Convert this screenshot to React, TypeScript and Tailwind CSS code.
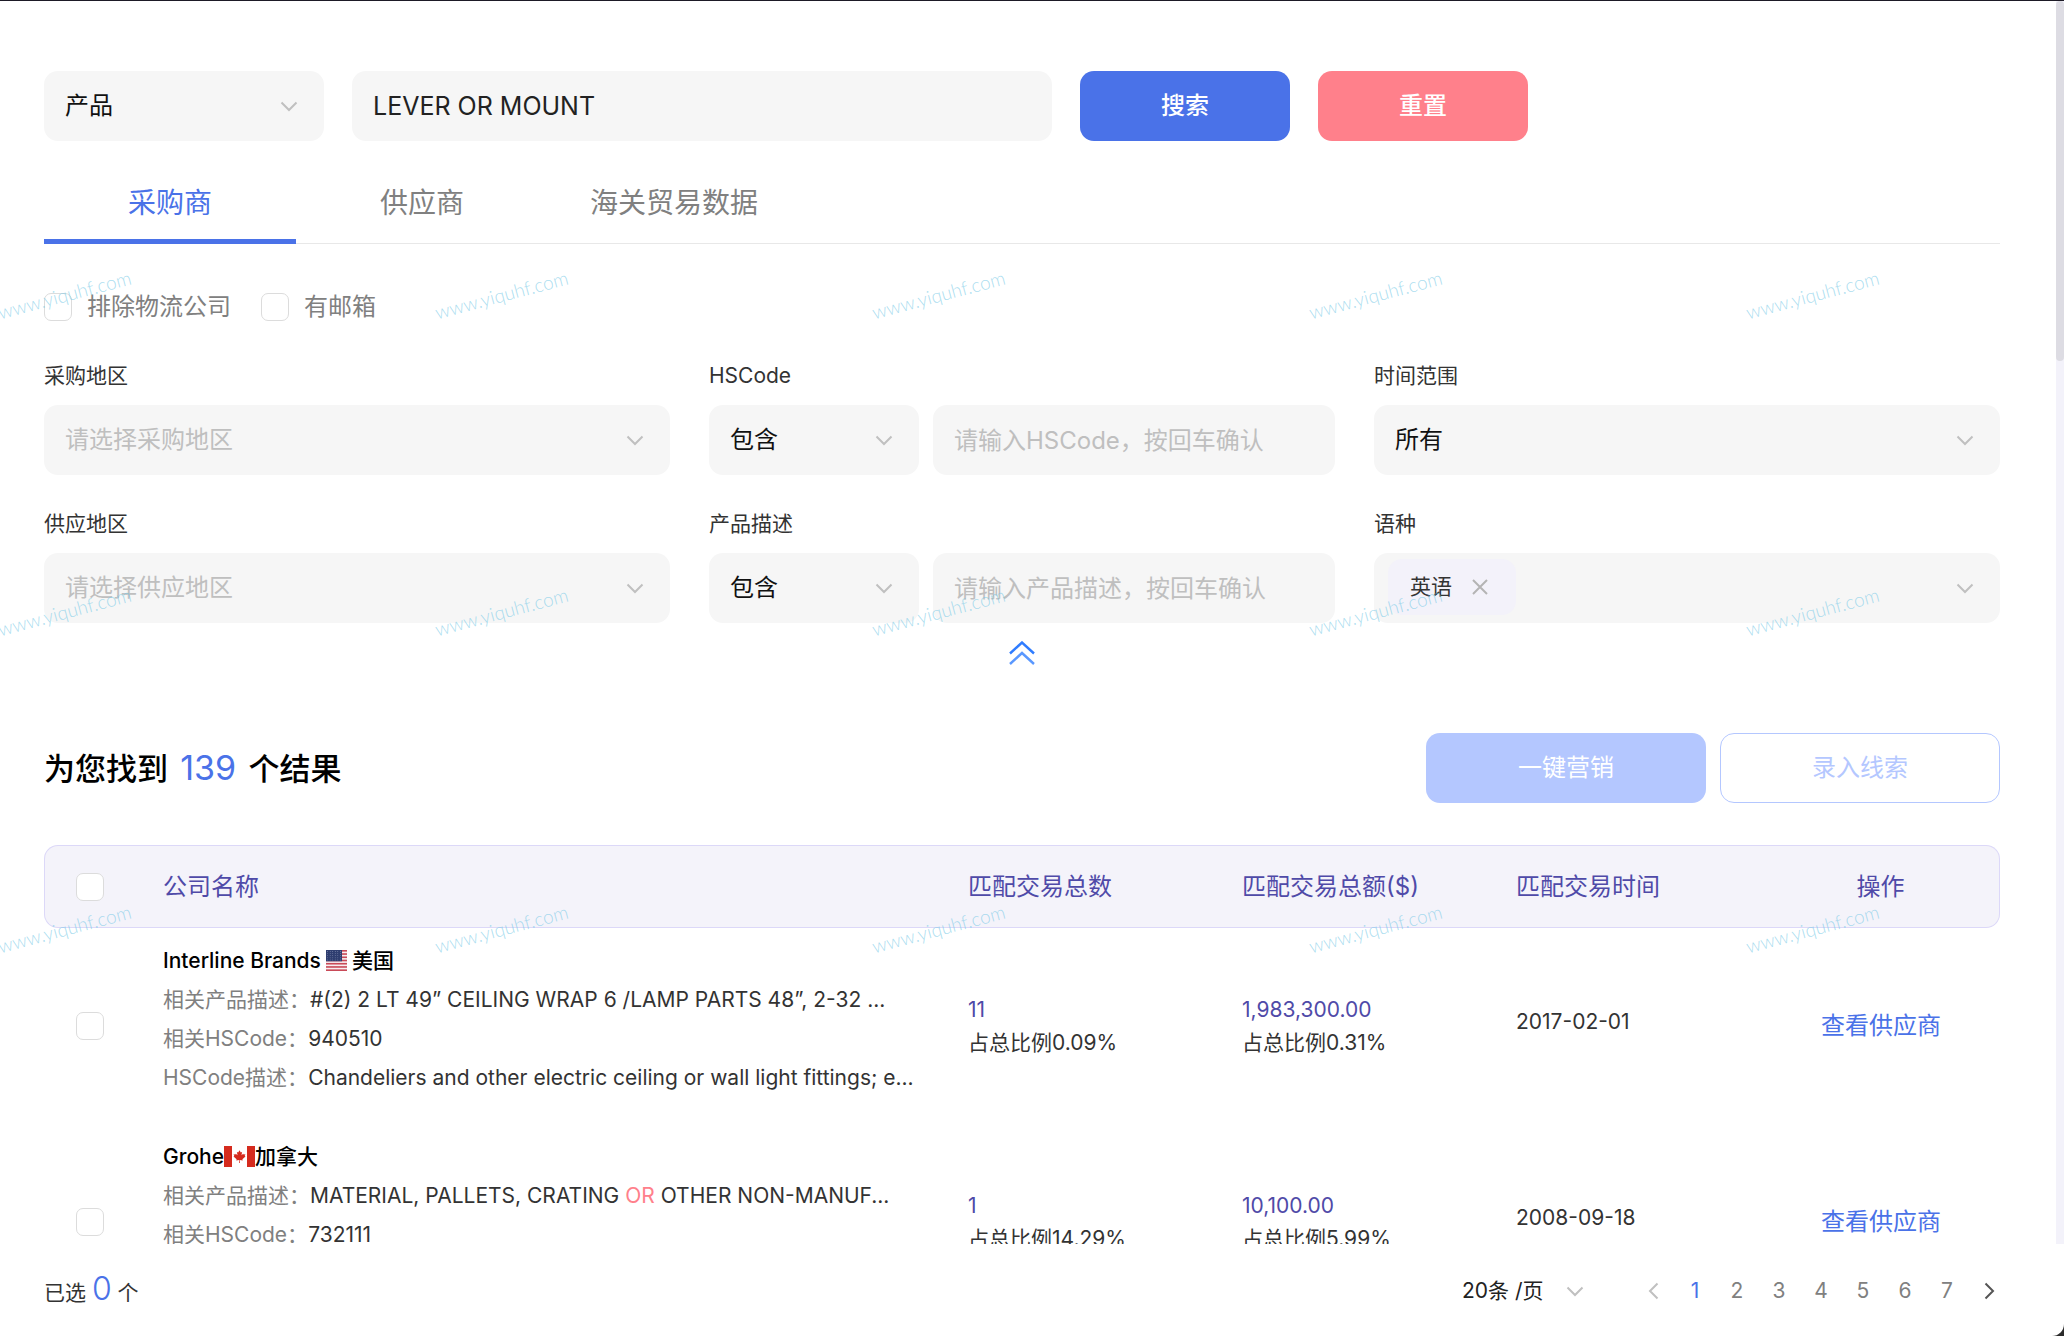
import React, { useState } from "react";

interface Company {
  id: number;
  name: string;
  spaced: boolean;
  flag: React.ReactNode;
  country: string;
  product: React.ReactNode;
  hsCode: string;
  hsDesc: string;
  count: string;
  countRatio: string;
  amount: string;
  amountRatio: string;
  date: string;
}

const UsFlag = () => (
  <svg viewBox="0 0 21 21" className="w-[21px] h-[21px] shrink-0" aria-hidden="true">
    <rect width="21" height="21" fill="#f7eef0" />
    {[0, 1, 2, 3, 4, 5, 6].map((i) => (
      <rect key={i} y={i * 3.23} width="21" height="1.62" fill="#c94a58" />
    ))}
    <rect width="16" height="11.3" fill="#2f3e70" />
    {[0, 1, 2, 3, 4].map((r) =>
      [0, 1, 2, 3, 4, 5].map((c) => (
        <circle key={`${r}-${c}`} cx={1.6 + c * 2.55} cy={1.5 + r * 2.1} r="0.4" fill="#aab2cf" />
      ))
    )}
  </svg>
);

const CaFlag = () => (
  <svg viewBox="0 0 31 21" className="w-[31px] h-[21px] shrink-0" aria-hidden="true">
    <rect width="31" height="21" fill="#fff" />
    <rect width="8" height="21" fill="#d52b1e" />
    <rect x="23" width="8" height="21" fill="#d52b1e" />
    <path
      d="M15.5 4.2l1.3 2.4 1.3-.6-.6 3.2 1.7-1.5.4.9 1.8-.3-.7 1.8.8.5-3.1 2.6.3 1.2-2.9-.4.1 3h-.8l.1-3-2.9.4.3-1.2-3.1-2.6.8-.5-.7-1.8 1.8.3.4-.9 1.7 1.5-.6-3.2 1.3.6z"
      fill="#d52b1e"
    />
  </svg>
);

const companies: Company[] = [
  {
    id: 1,
    name: "Interline Brands",
    spaced: true,
    flag: <UsFlag />,
    country: "美国",
    product: "#(2) 2 LT 49” CEILING WRAP 6 /LAMP PARTS 48”, 2-32 ...",
    hsCode: "940510",
    hsDesc: "Chandeliers and other electric ceiling or wall light fittings; e...",
    count: "11",
    countRatio: "0.09%",
    amount: "1,983,300.00",
    amountRatio: "0.31%",
    date: "2017-02-01"
  },
  {
    id: 2,
    name: "Grohe",
    spaced: false,
    flag: <CaFlag />,
    country: "加拿大",
    product: (
      <>
        MATERIAL, PALLETS, CRATING <span className="text-[#ff808b]">OR</span> OTHER NON-MANUF...
      </>
    ),
    hsCode: "732111",
    hsDesc: "Cooking appliances and plate warmers; for gas fuel or for both...",
    count: "1",
    countRatio: "14.29%",
    amount: "10,100.00",
    amountRatio: "5.99%",
    date: "2008-09-18"
  }
];

const tabs = ["采购商", "供应商", "海关贸易数据"];
const pages = [1, 2, 3, 4, 5, 6, 7];

const fieldClass =
  "w-full h-[70px] rounded-[14px] bg-[#f6f6f6] px-[21px] outline-none placeholder:text-[#bfbfbf]";
const checkboxClass =
  "block w-7 h-7 shrink-0 appearance-none rounded-[7px] border border-[#dcdcdc] bg-white checked:bg-[#4a72e8]";

function Chevron({ className = "" }: { className?: string }) {
  return (
    <svg
      viewBox="0 0 18 11"
      className={`w-[18px] h-[11px] pointer-events-none ${className}`}
      fill="none"
      stroke="#c0c0c0"
      strokeWidth="2"
      aria-hidden="true"
    >
      <path d="M1.5 1.5L9 9l7.500-7.500" />
    </svg>
  );
}

interface SelectProps {
  id?: string;
  label?: string;
  options: string[];
  muted?: boolean;
}

function Select({ id, label, options, muted = false }: SelectProps) {
  return (
    <div className="relative w-full">
      <select
        id={id}
        aria-label={label}
        className={`${fieldClass} text-[24px] appearance-none ${muted ? "text-[#bfbfbf]" : "text-[#111]"}`}
      >
        {options.map((option) => (
          <option key={option}>{option}</option>
        ))}
      </select>
      <Chevron className="absolute right-[26px] top-[30px]" />
    </div>
  );
}

function Field({ id, label, children }: { id: string; label: string; children: React.ReactNode }) {
  return (
    <div>
      <label htmlFor={id} className="block mb-2 text-[21px] leading-[42px] text-[#333]">
        {label}
      </label>
      {children}
    </div>
  );
}

function Watermark() {
  return (
    <div
      className="absolute top-[135px] -left-[154px] grid grid-cols-[repeat(5,437px)] auto-rows-[317px] place-items-center pointer-events-none select-none"
      aria-hidden="true"
    >
      {Array.from({ length: 15 }, (_, i) => (
        <span key={i} className="-rotate-15 font-['Lato'] font-light text-[19px] leading-none text-[#74c8e6]/60">
          www.yiquhf.com
        </span>
      ))}
    </div>
  );
}

export default function App() {
  const [activeTab, setActiveTab] = useState(0);
  const [keyword, setKeyword] = useState("LEVER OR MOUNT");
  const [page, setPage] = useState(1);

  return (
    <div className="h-screen bg-[#2b2b2b] font-['Inter','Noto_Sans_CJK_SC',sans-serif] text-[#333]">
      <div className="relative h-full flex flex-col overflow-hidden border-t border-[#1d1a26] bg-white rounded-br-[12px]">
        <div className="flex-1 min-h-0 flex">
          <main className="flex-1 min-w-0 overflow-hidden pt-[70px] pl-11 pr-14">
            {/* Search bar */}
            <form className="flex gap-7" onSubmit={(e) => e.preventDefault()}>
              <div className="w-[280px]">
                <Select label="搜索类型" options={["产品", "公司"]} />
              </div>
              <div className="w-[700px]">
                <input
                  aria-label="关键词"
                  value={keyword}
                  onChange={(e) => setKeyword(e.target.value)}
                  className={`${fieldClass} text-[25px] text-[#222]`}
                />
              </div>
              <button type="submit" className="w-[210px] h-[70px] rounded-[14px] bg-[#4a72e8] text-white text-[24px] font-medium">
                搜索
              </button>
              <button
                type="button"
                onClick={() => setKeyword("")}
                className="w-[210px] h-[70px] rounded-[14px] bg-[#ff808b] text-white text-[24px] font-medium"
              >
                重置
              </button>
            </form>

            {/* Tabs */}
            <div role="tablist" className="mt-5 flex border-b border-[#e8e8e8]">
              {tabs.map((tab, i) => (
                <button
                  key={tab}
                  role="tab"
                  aria-selected={i === activeTab}
                  onClick={() => setActiveTab(i)}
                  className={`w-[252px] h-[83px] -mb-px pt-[5px] border-b-[5px] text-[28px] ${
                    i === activeTab ? "border-[#4a72e8] text-[#4a72e8]" : "border-transparent text-[#808080]"
                  }`}
                >
                  {tab}
                </button>
              ))}
            </div>

            <div className="mt-[49px] flex gap-[30px] text-[24px] leading-7 text-[#808080]">
              <label className="flex items-center gap-[15px]">
                <input type="checkbox" className={checkboxClass} />
                排除物流公司
              </label>
              <label className="flex items-center gap-[15px]">
                <input type="checkbox" className={checkboxClass} />
                有邮箱
              </label>
            </div>

            {/* Filters */}
            <div className="mt-[34px] grid grid-cols-3 gap-x-[39px] gap-y-7">
              <Field id="buy-area" label="采购地区">
                <Select id="buy-area" options={["请选择采购地区"]} muted />
              </Field>
              <Field id="hscode" label="HSCode">
                <div className="flex gap-[14px]">
                  <div className="w-[210px] shrink-0">
                    <Select label="HSCode匹配方式" options={["包含", "不包含"]} />
                  </div>
                  <input id="hscode" placeholder="请输入HSCode，按回车确认" className={`${fieldClass} min-w-0 text-[24px]`} />
                </div>
              </Field>
              <Field id="time-range" label="时间范围">
                <Select id="time-range" options={["所有"]} />
              </Field>
              <Field id="supply-area" label="供应地区">
                <Select id="supply-area" options={["请选择供应地区"]} muted />
              </Field>
              <Field id="product-desc" label="产品描述">
                <div className="flex gap-[14px]">
                  <div className="w-[210px] shrink-0">
                    <Select label="产品描述匹配方式" options={["包含", "不包含"]} />
                  </div>
                  <input id="product-desc" placeholder="请输入产品描述，按回车确认" className={`${fieldClass} min-w-0 text-[24px]`} />
                </div>
              </Field>
              <Field id="language" label="语种">
                <div className="relative flex h-[70px] rounded-[14px] bg-[#f6f6f6] px-[14px] pt-[6px]">
                  <span className="flex h-14 items-center gap-5 rounded-[14px] bg-[#f3f2fa] pl-[22px] pr-7 text-[21px]">
                    英语
                    <button aria-label="移除英语">
                      <svg viewBox="0 0 16 16" className="w-4 h-4" stroke="#b4b4b4" strokeWidth="2">
                        <path d="M1 1l14 14M15 1L1 15" />
                      </svg>
                    </button>
                  </span>
                  <input id="language" className="flex-1 min-w-0 bg-transparent outline-none" />
                  <Chevron className="absolute right-[26px] top-[30px]" />
                </div>
              </Field>
            </div>

            <div className="mt-[14px] flex justify-center">
              <button aria-label="收起筛选" className="h-8 px-2">
                <svg viewBox="0 0 26 24" className="w-[26px] h-6" fill="none" strokeWidth="2.4">
                  <path d="M1 12.500L13 1.500l12 11" stroke="#2f7cff" />
                  <path d="M1 23L13 12l12 11" stroke="#5a98ff" />
                </svg>
              </button>
            </div>

            {/* Result summary */}
            <div className="mt-16 flex items-center gap-[14px]">
              <h2 className="flex-1 text-[31px] leading-[48px] font-medium text-black">
                为您找到 <span className="mx-1 text-[34px] text-[#4a72e8] font-normal">139</span> 个结果
              </h2>
              <button disabled className="w-[280px] h-[70px] rounded-[14px] bg-[#b4c7ff] text-white text-[24px]">
                一键营销
              </button>
              <button
                disabled
                className="w-[280px] h-[70px] rounded-[14px] border border-[#b4c7ff] bg-white text-[#b4c7ff] text-[24px]"
              >
                录入线索
              </button>
            </div>

            {/* Result table */}
            <table className="mt-[42px] w-full table-fixed border-separate border-spacing-0 text-[21px]">
              <colgroup>
                <col className="w-[119px]" />
                <col />
                <col className="w-[274px]" />
                <col className="w-[274px]" />
                <col className="w-[246px]" />
                <col className="w-[238px]" />
              </colgroup>
              <thead>
                <tr className="text-left text-[24px] text-[#4f4aa8] *:h-[83px] *:border-y *:border-[#dcd8f8] *:bg-[#f4f3fa] *:font-normal">
                  <th className="pl-[31px] border-l rounded-l-[14px]">
                    <input type="checkbox" aria-label="全选" className={checkboxClass} />
                  </th>
                  <th>公司名称</th>
                  <th>匹配交易总数</th>
                  <th>匹配交易总额($)</th>
                  <th>匹配交易时间</th>
                  <th className="text-center border-r rounded-r-[14px]">操作</th>
                </tr>
              </thead>
              <tbody>
                {companies.map((company) => (
                  <tr key={company.id}>
                    <td className="pl-8">
                      <input type="checkbox" aria-label={company.name} className={checkboxClass} />
                    </td>
                    <td className="pt-[13px] pb-[27px] leading-[39px] whitespace-nowrap">
                      <div className={`flex items-center font-medium text-black ${company.spaced ? "gap-[5px]" : ""}`}>
                        {company.name}
                        {company.flag}
                        {company.country}
                      </div>
                      <div>
                        <span className="text-[#808080]">相关产品描述：</span>
                        {company.product}
                      </div>
                      <div>
                        <span className="text-[#808080]">相关HSCode：</span>
                        {company.hsCode}
                      </div>
                      <div>
                        <span className="text-[#808080]">HSCode描述：</span>
                        {company.hsDesc}
                      </div>
                    </td>
                    <td className="leading-[33px]">
                      <div className="text-[#4f4aa8]">{company.count}</div>
                      <div>占总比例{company.countRatio}</div>
                    </td>
                    <td className="leading-[33px]">
                      <div className="text-[#4f4aa8]">{company.amount}</div>
                      <div>占总比例{company.amountRatio}</div>
                    </td>
                    <td className="pb-2">{company.date}</td>
                    <td className="text-center text-[24px]">
                      <a href="#supplier" className="text-[#4a72e8]">
                        查看供应商
                      </a>
                    </td>
                  </tr>
                ))}
              </tbody>
            </table>
          </main>

          {/* Scrollbar */}
          <div className="w-2 bg-[#f3f2fa]">
            <div className="h-[29%] rounded-[4px] bg-[#dddce3]" />
          </div>
        </div>

        <footer className="h-[92px] shrink-0 flex items-center justify-between pt-0.5 pl-11 pr-[54px] text-[21px]">
          <p className="leading-8">
            已选 <span className="text-[32px] font-light text-[#4a72e8]">0</span> 个
          </p>
          <nav className="flex items-center" aria-label="分页">
            <div className="relative mr-12">
              <select aria-label="每页条数" className="w-[122px] appearance-none bg-transparent text-[#222] outline-none">
                <option>20条 /页</option>
                <option>50条 /页</option>
              </select>
              <Chevron className="absolute right-0 top-[11px]" />
            </div>
            <button aria-label="上一页" className="w-[42px] flex justify-center">
              <svg viewBox="0 0 11 18" className="w-[11px] h-[18px]" fill="none" stroke="#c0c0c0" strokeWidth="2">
                <path d="M9.500 1.500L2 9l7.500 7.500" />
              </svg>
            </button>
            {pages.map((n) => (
              <button
                key={n}
                onClick={() => setPage(n)}
                className={`w-[42px] ${n === page ? "text-[#4a72e8]" : "text-[#808080]"}`}
              >
                {n}
              </button>
            ))}
            <button aria-label="下一页" className="w-[42px] flex justify-center">
              <svg viewBox="0 0 11 18" className="w-[11px] h-[18px]" fill="none" stroke="#555" strokeWidth="2">
                <path d="M1.500 1.500L9 9l-7.500 7.500" />
              </svg>
            </button>
          </nav>
        </footer>

        <Watermark />
      </div>
    </div>
  );
}
